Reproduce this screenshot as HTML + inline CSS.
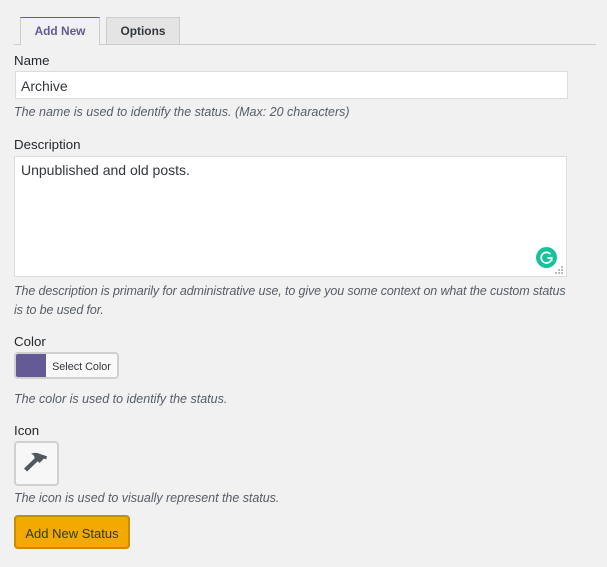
<!DOCTYPE html>
<html><head><meta charset="utf-8">
<style>
html,body{margin:0;padding:0;background:#f1f1f1;}
body{width:607px;height:567px;position:relative;overflow:hidden;font-family:"Liberation Sans",sans-serif;font-size:14px;color:#23282d;}
.a{position:absolute;white-space:nowrap;box-sizing:border-box;}
.h{color:#555d66;font-style:italic;font-size:12.5px;line-height:20px;}
.l{font-size:13.3px;line-height:20px;}
</style></head><body>
<div class="a" style="left:14px;top:44px;width:582px;height:1px;background:#ccc"></div>
<div class="a" style="left:20px;top:17px;width:80px;height:28px;background:#f1f1f1;border:1px solid #ccc;border-top:1px solid #635a96;border-bottom:0;text-align:center;font-weight:bold;font-size:11.9px;line-height:27px;color:#635a96">Add New</div>
<div class="a" style="left:106px;top:17px;width:74px;height:27px;background:#e4e4e4;border:1px solid #ccc;border-bottom:0;text-align:center;font-weight:bold;font-size:11.9px;line-height:27px;color:#32373c">Options</div>

<div class="a l" style="left:14px;top:51px">Name</div>
<div class="a" style="left:15px;top:71px;width:553px;height:28px;background:#fff;border:1px solid #ddd;padding-left:5px;line-height:28px;font-size:14px;color:#32373c">Archive</div>
<div class="a h" style="left:14px;top:102px">The name is used to identify the status. (Max: 20 characters)</div>

<div class="a l" style="left:14px;top:135px">Description</div>
<div class="a" style="left:14px;top:156px;width:553px;height:121px;background:#fff;border:1px solid #ddd;padding:3px 6px;line-height:20px;font-size:14px;color:#32373c">Unpublished and old posts.</div>
<svg class="a" style="left:535px;top:246px" width="24" height="24" viewBox="0 0 24 24"><circle cx="11.5" cy="11.5" r="10.5" fill="#15c39a"/><path d="M15.5 8.2A5.3 5.3 0 1 0 16.8 12H12.5M16.6 12.2v3" fill="none" stroke="#fff" stroke-width="1.7"/></svg>
<svg class="a" style="left:555px;top:265px" width="10" height="10" viewBox="0 0 10 10" fill="#bbb"><rect x="6" y="1" width="2" height="2"/><rect x="3" y="4" width="2" height="2"/><rect x="6" y="4" width="2" height="2"/><rect x="0" y="7" width="2" height="2"/><rect x="3" y="7" width="2" height="2"/><rect x="6" y="7" width="2" height="2"/></svg>
<div class="a h" style="left:14px;top:282px;line-height:19px;letter-spacing:-.13px">The description is primarily for administrative use, to give you some context on what the custom status<br>is to be used for.</div>

<div class="a l" style="left:14px;top:332px">Color</div>
<div class="a" style="left:14px;top:352px;width:105px;height:27px;border:2px solid #d0d0d0;border-radius:4px;background:#f7f7f7;overflow:hidden">
<div class="a" style="left:0;top:0;width:30px;height:23px;background:#635a96"></div>
<div class="a" style="left:30px;top:0;width:71px;height:23px;background:#f9f9f9;font-size:10.8px;line-height:26px;text-align:center;color:#32373c">Select Color</div>
</div>
<div class="a h" style="left:14px;top:389px">The color is used to identify the status.</div>

<div class="a l" style="left:14px;top:421px">Icon</div>
<div class="a" style="left:14px;top:441px;width:45px;height:45px;border:2px solid #d0d0d0;border-radius:4px;background:#f7f7f7"></div>
<svg class="a" style="left:23px;top:451px" width="26" height="24" viewBox="0 0 26 24"><path d="M1 17.5L4 20.5 15.5 9.5 12.5 6.5Z" fill="#50575e"/><path d="M8 2.8C11 1.4 14.5 1.6 17 3L24 5.2 23.2 8.4 20.8 7.6 16.5 12 11.5 7C11.5 5.2 10.5 3.6 8 2.8Z" fill="#50575e"/></svg>
<div class="a h" style="left:14px;top:488px;letter-spacing:-.03px">The icon is used to visually represent the status.</div>

<div class="a" style="left:14px;top:515px;width:116px;height:34px;background:#f4a900;border:2px solid #c98c05;border-radius:4px;text-align:center;line-height:33px;font-size:13px;color:#32373c">Add New Status</div>
</body></html>
